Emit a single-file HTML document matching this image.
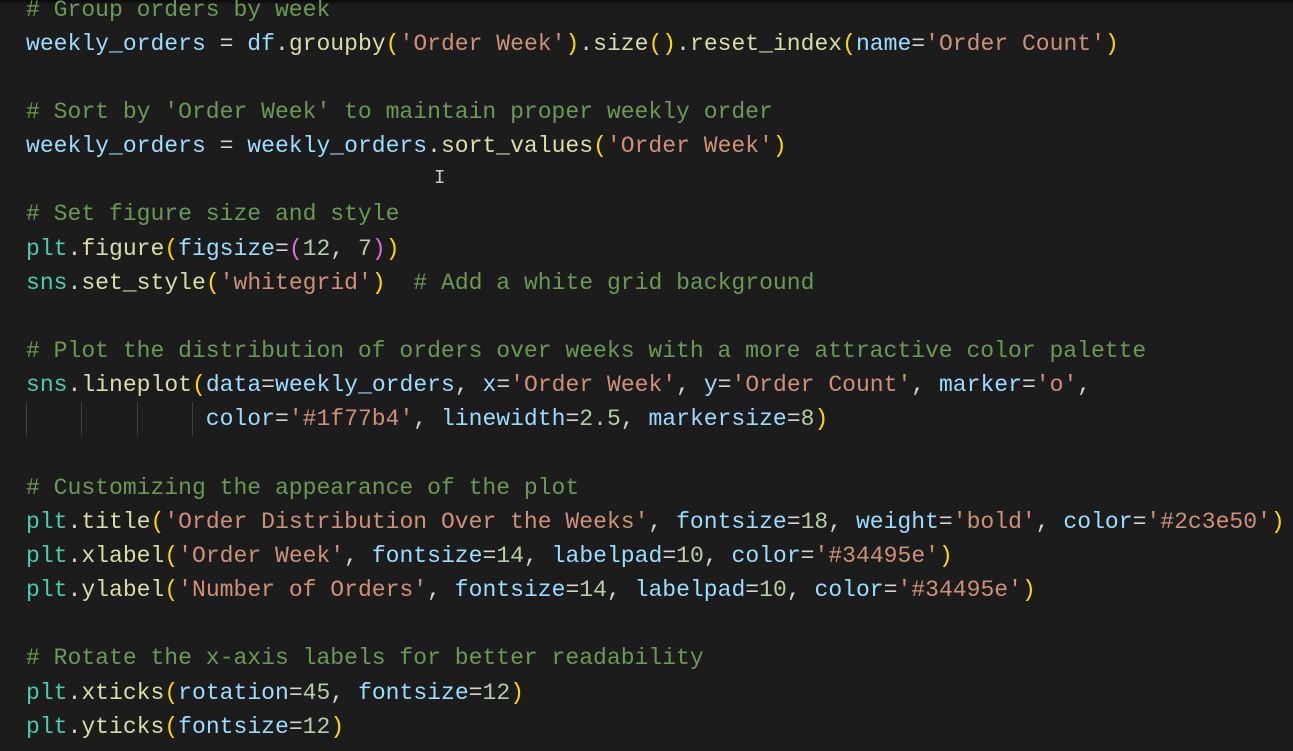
<!DOCTYPE html>
<html><head><meta charset="utf-8"><style>
html,body{margin:0;padding:0;background:#1c1c1c;width:1293px;height:751px;overflow:hidden}
body{position:relative}
.top{position:absolute;left:0;top:0;width:1293px;height:5px;background:linear-gradient(#0a0a0a,#1c1c1c)}
pre{position:absolute;left:26px;top:-7.5px;margin:0;font-family:"Liberation Mono",monospace;font-size:23.05px;line-height:34.15px;color:#d4d4d4;white-space:pre}
.v{color:#9cdcfe}.f{color:#dcdcaa}.s{color:#ce9178}.c{color:#6a9955}.n{color:#b5cea8}.t{color:#4ec9b0}.y{color:#ffd700}.p{color:#da70d6}
.g{position:absolute;top:402px;width:1px;height:34px;background:#404040}
.cur{position:absolute;left:434px;top:167px;color:#ccc;font-family:"Liberation Mono",monospace;font-size:19px}
</style></head><body>
<div class="top"></div>
<div class="g" style="left:26px"></div><div class="g" style="left:81px"></div><div class="g" style="left:137px"></div><div class="g" style="left:192px"></div>
<pre><span class="c"># Group orders by week</span>
<span class="v">weekly_orders</span> = <span class="v">df</span>.<span class="f">groupby</span><span class="y">(</span><span class="s">'Order Week'</span><span class="y">)</span>.<span class="f">size</span><span class="y">()</span>.<span class="f">reset_index</span><span class="y">(</span><span class="v">name</span>=<span class="s">'Order Count'</span><span class="y">)</span>

<span class="c"># Sort by 'Order Week' to maintain proper weekly order</span>
<span class="v">weekly_orders</span> = <span class="v">weekly_orders</span>.<span class="f">sort_values</span><span class="y">(</span><span class="s">'Order Week'</span><span class="y">)</span>

<span class="c"># Set figure size and style</span>
<span class="t">plt</span>.<span class="f">figure</span><span class="y">(</span><span class="v">figsize</span>=<span class="p">(</span><span class="n">12</span>, <span class="n">7</span><span class="p">)</span><span class="y">)</span>
<span class="t">sns</span>.<span class="f">set_style</span><span class="y">(</span><span class="s">'whitegrid'</span><span class="y">)</span>  <span class="c"># Add a white grid background</span>

<span class="c"># Plot the distribution of orders over weeks with a more attractive color palette</span>
<span class="t">sns</span>.<span class="f">lineplot</span><span class="y">(</span><span class="v">data</span>=<span class="v">weekly_orders</span>, <span class="v">x</span>=<span class="s">'Order Week'</span>, <span class="v">y</span>=<span class="s">'Order Count'</span>, <span class="v">marker</span>=<span class="s">'o'</span>,
             <span class="v">color</span>=<span class="s">'#1f77b4'</span>, <span class="v">linewidth</span>=<span class="n">2.5</span>, <span class="v">markersize</span>=<span class="n">8</span><span class="y">)</span>

<span class="c"># Customizing the appearance of the plot</span>
<span class="t">plt</span>.<span class="f">title</span><span class="y">(</span><span class="s">'Order Distribution Over the Weeks'</span>, <span class="v">fontsize</span>=<span class="n">18</span>, <span class="v">weight</span>=<span class="s">'bold'</span>, <span class="v">color</span>=<span class="s">'#2c3e50'</span><span class="y">)</span>
<span class="t">plt</span>.<span class="f">xlabel</span><span class="y">(</span><span class="s">'Order Week'</span>, <span class="v">fontsize</span>=<span class="n">14</span>, <span class="v">labelpad</span>=<span class="n">10</span>, <span class="v">color</span>=<span class="s">'#34495e'</span><span class="y">)</span>
<span class="t">plt</span>.<span class="f">ylabel</span><span class="y">(</span><span class="s">'Number of Orders'</span>, <span class="v">fontsize</span>=<span class="n">14</span>, <span class="v">labelpad</span>=<span class="n">10</span>, <span class="v">color</span>=<span class="s">'#34495e'</span><span class="y">)</span>

<span class="c"># Rotate the x-axis labels for better readability</span>
<span class="t">plt</span>.<span class="f">xticks</span><span class="y">(</span><span class="v">rotation</span>=<span class="n">45</span>, <span class="v">fontsize</span>=<span class="n">12</span><span class="y">)</span>
<span class="t">plt</span>.<span class="f">yticks</span><span class="y">(</span><span class="v">fontsize</span>=<span class="n">12</span><span class="y">)</span></pre>
<div class="cur">I</div>
</body></html>
